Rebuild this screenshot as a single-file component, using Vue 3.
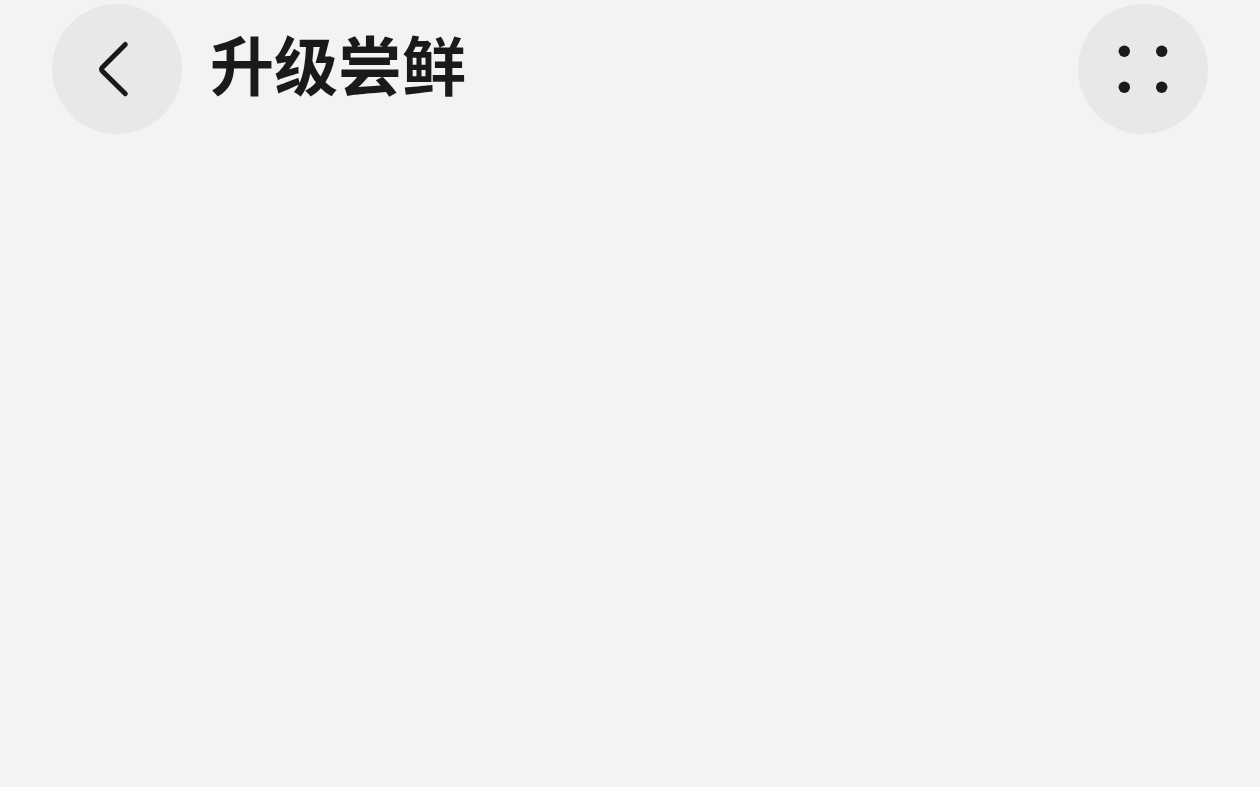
<script setup>
const title = '升级尝鲜'
const dots = [
  [46.3, 47.3],
  [83.7, 47.3],
  [46.3, 83.2],
  [83.7, 83.2],
]
</script>

<template>
  <main class="page">
    <header class="bar">
      <button class="round" type="button" aria-label="返回">
        <svg viewBox="0 0 130 130" aria-hidden="true">
          <path class="chevron" d="M73.300 40.500 L50.500 63.200 Q48.500 65.200 50.500 67.200 L73.300 89.700" />
        </svg>
      </button>
      <h1 class="title">{{ title }}</h1>
      <button class="round" type="button" aria-label="更多">
        <svg viewBox="0 0 130 130" aria-hidden="true">
          <circle v-for="[x, y] in dots" :key="`${x}-${y}`" :cx="x" :cy="y" r="5.7" />
        </svg>
      </button>
    </header>
  </main>
</template>

<style>
body {
  background: #f1f3f5;
}
</style>

<style scoped>
.page {
  min-height: 100vh;
  box-sizing: border-box;
  padding: 4px 52px;
  background: #f1f3f5;
  color: #191a1a;
  font-family: "Noto Sans CJK SC", sans-serif;
}
.bar {
  display: flex;
  align-items: center;
  gap: 28px;
}
.round {
  flex: none;
  width: 130px;
  height: 130px;
  padding: 0;
  border: 0;
  border-radius: 50%;
  background: #e6e8ea;
  color: inherit;
  cursor: pointer;
}
.round svg {
  display: block;
  width: 100%;
  height: 100%;
  fill: currentColor;
}
.round .chevron {
  fill: none;
  stroke: currentColor;
  stroke-width: 5;
  stroke-linecap: round;
  stroke-linejoin: round;
}
.title {
  flex: 1;
  margin: 0;
  padding-bottom: 14px;
  font-size: 64px;
  line-height: 96px;
  font-weight: 700;
}
</style>
